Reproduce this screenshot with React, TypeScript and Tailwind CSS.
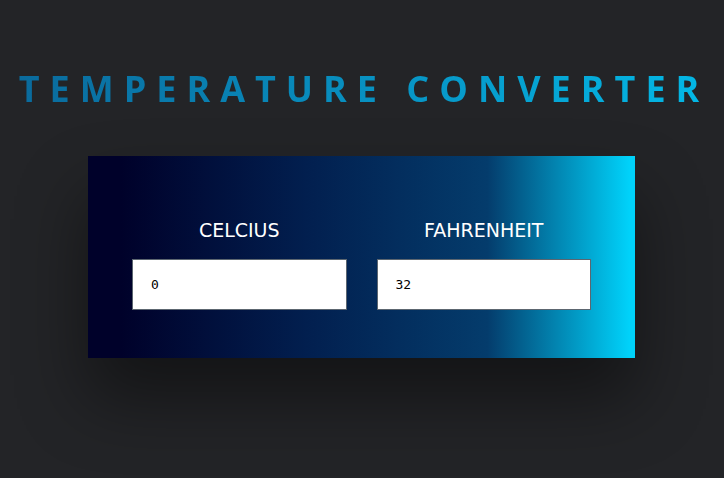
export default function App() {
  return (
    <div className="flex min-h-[478px] w-full flex-col items-center bg-[#232427] font-['DejaVu_Sans',sans-serif]">
      <h1 className="mt-[67px] whitespace-nowrap bg-gradient-to-r from-[#0a6a9c] to-[#03b8e6] bg-clip-text pl-[4px] font-['Open_Sans',sans-serif] text-[36px] font-bold leading-[44px] tracking-[10px] text-transparent">
        TEMPERATURE CONVERTER
      </h1>
      <div className="mt-[45px] mr-[1px] flex w-[547px] gap-[30px] bg-[linear-gradient(to_right,#00012a_6%,#021f4f_40%,#043c6c_73%,#00d2fa_99%)] px-[44px] pb-[48px] pt-[62px] shadow-[0_40px_70px_rgba(0,0,0,0.45)]">
        <Field label="CELCIUS" value="0" />
        <Field label="FAHRENHEIT" value="32" />
      </div>
    </div>
  );
}

function Field({ label, value }: { label: string; value: string }) {
  return (
    <label className="flex flex-1 flex-col items-center">
      <span className="text-[19px] leading-[24px] text-white">{label}</span>
      <input
        defaultValue={value}
        className="mt-[17px] h-[51px] w-full border border-[#5c6670] bg-white px-[18px] font-['DejaVu_Sans_Mono',monospace] text-[13px] text-black outline-none"
      />
    </label>
  );
}
